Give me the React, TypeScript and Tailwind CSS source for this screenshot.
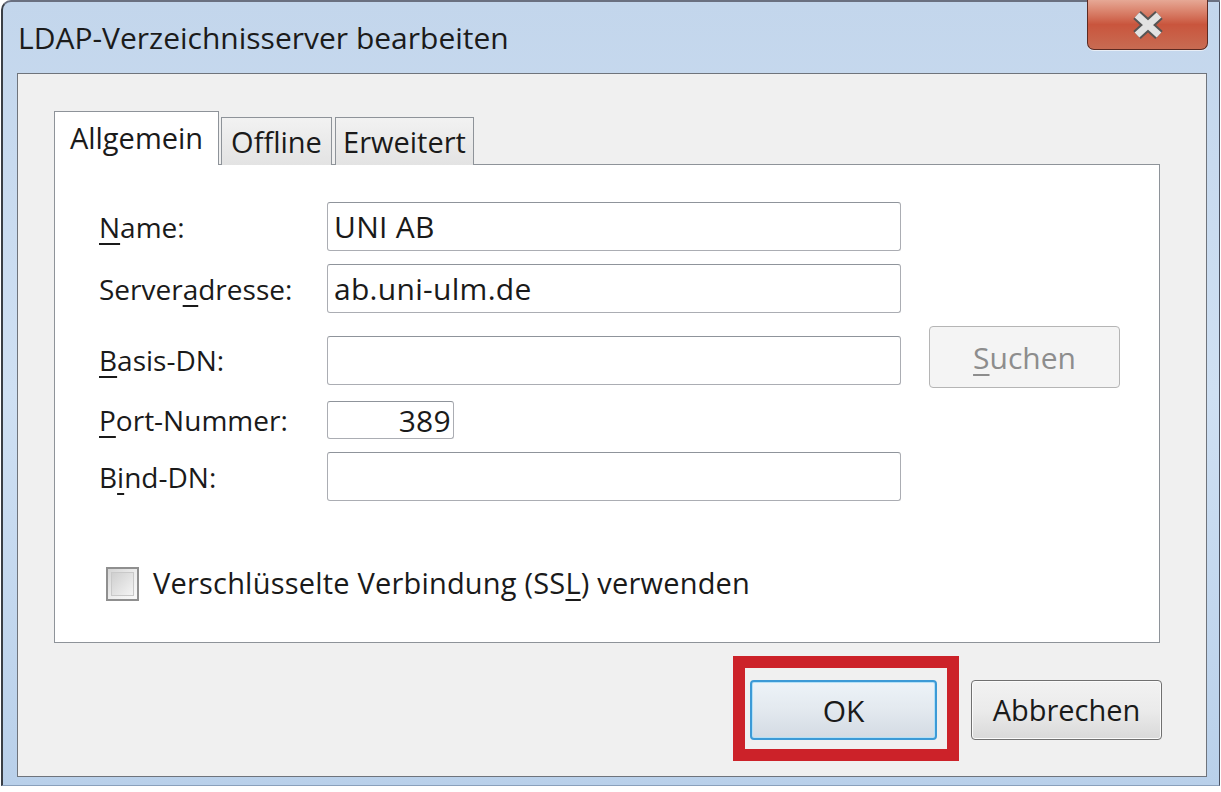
import React from "react";

const font = { fontFamily: '"Open Sans", "Noto Sans", sans-serif' };

const Key: React.FC<{ children: React.ReactNode }> = ({ children }) => (
  <span className="underline underline-offset-[5px] decoration-[2px]">{children}</span>
);

const Field: React.FC<{ value?: string; className?: string }> = ({ value, className }) => (
  <div
    className={`border border-[#abadb3] border-t-[#8f949b] rounded-[3px] bg-white flex items-center px-[6px] text-[30px] tracking-[0.3px] text-[#1a1a1a] ${className ?? ""}`}
  >
    {value}
  </div>
);

const Row: React.FC<{ label: React.ReactNode; children: React.ReactNode; className?: string }> = ({
  label,
  children,
  className,
}) => (
  <div className={`flex items-center ${className ?? ""}`}>
    <div className="w-[228px] text-[28px] leading-[36px] text-[#1a1a1a]">{label}</div>
    {children}
  </div>
);

const App: React.FC = () => {
  return (
    <div
      className="w-[1221px] h-[792px] bg-white overflow-hidden"
      style={font}
    >
      <div className="relative w-[1219px] h-[786px] ml-[1px] rounded-tl-[10px] border-l-[2px] border-t-[2px] border-r border-b border-l-[#3a3f46] border-t-[#6a7080] border-r-[#4a5060] border-b-[#8aa0bb] bg-gradient-to-b from-[#c3d6ec] via-[#cfe0f3] to-[#b9d0ea]">
        {/* title bar */}
        <div className="h-[71px] flex items-center pl-[15px]">
          <span className="text-[30px] text-[#1b1b1b]">LDAP-Verzeichnisserver bearbeiten</span>
        </div>
        <div className="absolute top-[-2px] right-[11px] w-[121px] h-[50px] rounded-b-[7px] border border-[#5b2a22] border-t-0 bg-gradient-to-b from-[#e6a895] via-[#c9553d] to-[#c86b52] flex items-center justify-center shadow-[0_1px_0_#e8eef6]">
          <svg width="40" height="30" viewBox="0 0 40 30">
            <path d="M9 5 L31 25 M31 5 L9 25" stroke="#555555" strokeWidth="11" strokeLinecap="butt" />
            <path d="M9 5 L31 25 M31 5 L9 25" stroke="#e2e2e2" strokeWidth="7" strokeLinecap="butt" />
          </svg>
        </div>

        {/* client area */}
        <div className="ml-[14px] mr-[12px] h-[704px] border border-[#6f747c] bg-[#f0f0f0] pt-[37px] pl-[36px] pr-[46px]">
          {/* tabs */}
          <div className="flex items-end h-[54px] text-[29px] text-[#1a1a1a]">
            <div className="relative z-10 h-[54px] w-[165px] border border-[#8e9399] border-b-0 bg-white flex items-center justify-center pb-[2px]">
              Allgemein
            </div>
            <div className="h-[48px] w-[111px] ml-[2px] border border-[#8e9399] border-b-0 bg-gradient-to-b from-[#f2f2f2] to-[#e3e3e3] flex items-center justify-center">
              Offline
            </div>
            <div className="h-[48px] w-[139px] ml-[3px] border border-[#8e9399] border-b-0 bg-gradient-to-b from-[#f2f2f2] to-[#e3e3e3] flex items-center justify-center">
              Erweitert
            </div>
          </div>

          {/* panel */}
          <div className="-mt-[1px] h-[479px] border border-[#8e9399] bg-white pl-[44px] pt-[37px]">
            <Row label={<><Key>N</Key>ame:</>}>
              <Field value="UNI AB" className="w-[574px] h-[49px]" />
            </Row>
            <Row label={<>Server<Key>a</Key>dresse:</>} className="mt-[13px]">
              <Field value="ab.uni-ulm.de" className="w-[574px] h-[49px]" />
            </Row>
            <div className="flex items-start mt-[13px] h-[61px]">
              <div className="w-[228px] mt-[10px] h-[48px] flex items-center text-[28px] text-[#1a1a1a]">
                <span><Key>B</Key>asis-DN:</span>
              </div>
              <Field className="w-[574px] h-[49px] mt-[10px]" />
              <div className="ml-[28px] w-[191px] h-[62px] rounded-[4px] border border-[#b5b5b5] bg-[#f4f4f4] flex items-center justify-center text-[30px] text-[#8d8d8d]">
                <span><Key>S</Key>uchen</span>
              </div>
            </div>
            <Row label={<><Key>P</Key>ort-Nummer:</>} className="mt-[14px]">
              <Field value="389" className="w-[127px] h-[38px] justify-end pr-[2px]" />
            </Row>
            <Row label={<>B<Key>i</Key>nd-DN:</>} className="mt-[13px]">
              <Field className="w-[574px] h-[49px]" />
            </Row>

            <div className="flex items-center mt-[62px] ml-[7px]">
              <div className="w-[33px] h-[34px] border-[2px] border-[#8f8f8f] bg-gradient-to-br from-[#d5d5d5] via-[#ececec] to-[#fafafa] p-[3px]">
                <div className="w-full h-full border border-[#c9c9c9] bg-gradient-to-br from-[#cfcfcf] to-[#f4f4f4]" />
              </div>
              <span className="ml-[14px] text-[29px] tracking-[0.2px] text-[#1a1a1a] -mt-[2px]">
                Verschlüsselte Verbindung (SS<Key>L</Key>) verwenden
              </span>
            </div>
          </div>

          {/* buttons */}
          <div className="flex justify-end mt-[37px] -mr-[2px]">
            <div className="relative">
              <div className="absolute -left-[17px] -top-[24px] w-[226px] h-[105px] border-[12px] border-[#cc2229] pointer-events-none" />
              <div className="w-[187px] h-[60px] rounded-[4px] border-[2px] border-[#3c9ad6] bg-gradient-to-b from-[#edf3f8] via-[#e3e9ef] to-[#d3dbe3] flex items-center justify-center text-[30px] text-[#1a1a1a] shadow-[inset_0_0_0_1px_#b3e0f7]">
                OK
              </div>
            </div>
            <div className="ml-[34px] w-[191px] h-[60px] rounded-[4px] border border-[#707070] bg-gradient-to-b from-[#f2f2f2] via-[#ebebeb] to-[#d9d9d9] flex items-center justify-center text-[29px] text-[#1a1a1a] shadow-[inset_0_0_0_1px_#fbfbfb]">
              Abbrechen
            </div>
          </div>
        </div>
      </div>
    </div>
  );
};

export default App;
